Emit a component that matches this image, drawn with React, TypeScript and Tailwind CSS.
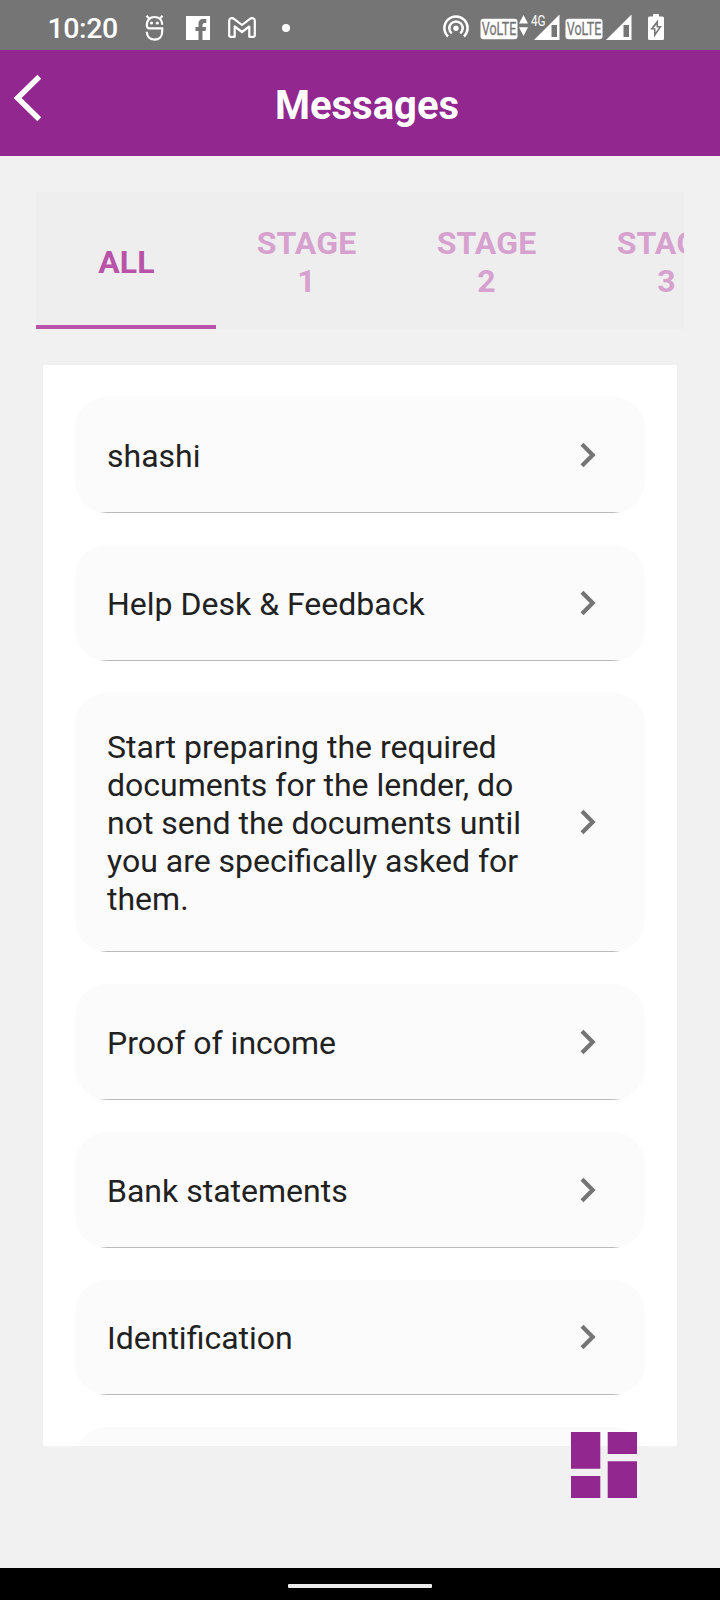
import { ReactNode } from "react";

const messages: string[] = [
  "shashi",
  "Help Desk & Feedback",
  "Start preparing the required documents for the lender, do not send the documents until you are specifically asked for them.",
  "Proof of income",
  "Bank statements",
  "Identification",
];

const stages = ["1", "2", "3"];

function VoLte() {
  return (
    <svg className="overflow-visible" width="38" height="22" viewBox="0 0 38 22">
      <rect x="0.5" y="0.8" width="37" height="20.4" rx="3" fill="#fff" />
      <text x="19" y="17.200" textAnchor="middle" textLength="34.500" lengthAdjust="spacingAndGlyphs" fontFamily="Roboto, sans-serif" fontSize="19" fill="#757575" stroke="#757575" strokeWidth="0.3">
        VoLTE
      </text>
    </svg>
  );
}

function Signal() {
  return (
    <svg width="26" height="26" viewBox="0 0 26 26" fill="#fff">
      <path fillRule="evenodd" d="M0 26 25.500 0.500V26ZM17.500 11V23H23V11Z" />
    </svg>
  );
}

function StatusBar() {
  return (
    <header className="flex h-[50px] items-start bg-[#757575] text-white">
      <span className="ml-[47.5px] mt-[12px] w-[70px] whitespace-nowrap text-[28.5px] font-medium leading-[33px] tracking-[-0.4px]">10:20</span>
      <svg className="ml-[27px] mt-[15px]" width="20" height="27" viewBox="0 0 20 27" fill="none" stroke="#fff" strokeWidth="2.2">
        <path d="M17.200 9.800C17.200 5 14 2 9.500 2S1.800 5 1.800 9.800Q1.800 13.400 4.500 13.400H17.200V16.500C17.200 21.500 14.300 24.600 9.500 24.600S1.800 21.500 1.800 16.800M1.500 .8 4.500 4M17.500 .8 14.500 4" />
        <g fill="#fff" stroke="none">
          <circle cx="6.500" cy="8" r="1.600" />
          <circle cx="12.300" cy="8" r="1.600" />
        </g>
      </svg>
      <svg className="ml-[21.500px] mt-4" width="24" height="24" viewBox="0 0 24 24">
        <path fill="#fff" fillRule="evenodd" d="M0 0H24V24H16.500V15H19.500L20.200 11H16.500V9Q16.500 7 18.500 7H20.300V3H17Q12.500 3 12.500 8V11H9.500V15H12.500V24H0Z" />
      </svg>
      <svg className="ml-[18px] mt-[17px]" width="28" height="21" viewBox="0 0 28 21" fill="none" stroke="#fff" strokeWidth="2.200" strokeLinejoin="round">
        <path d="M1.200 3.500C1.200 1.200 4 .3 6 1.900L14 8 22 1.900C24 .3 26.800 1.200 26.800 3.500V18.300Q26.800 19.800 25.300 19.800H21.300V9.500L14 15 6.700 9.500V19.800H2.700Q1.200 19.800 1.200 18.300Z" />
      </svg>
      <span className="ml-[26px] mt-6 size-2 rounded-full bg-white" />
      <svg className="ml-[153px] mt-[15px]" width="26" height="23" viewBox="0 0 26 23" fill="none" stroke="#fff" strokeWidth="2.500">
        <path d="M5 21.500A11.600 11.600 0 1 1 21 21.500M8.800 18.300A6.700 6.700 0 1 1 17.200 18.300" />
        <circle cx="13" cy="13.300" r="2.700" fill="#fff" stroke="none" />
      </svg>
      <div className="ml-[11px] mt-[17.500px]"><VoLte /></div>
      <svg className="ml-px mt-[15px]" width="9" height="21" viewBox="0 0 9 21" fill="#fff"><path d="M4.500 0 9 8.500H0ZM0 12.300H9L4.500 21Z" /></svg>
      <div className="relative ml-[6px] mt-[14px]">
        <Signal />
        <span className="absolute left-[-3px] top-0 origin-left scale-x-[0.78] text-[15px] leading-[15px]">4G</span>
      </div>
      <div className="ml-[4.500px] mt-[17.500px]"><VoLte /></div>
      <div className="ml-[3px] mt-[14px]"><Signal /></div>
      <svg className="ml-[16px] mt-[14px]" width="16" height="26" viewBox="0 0 16 26">
        <path fill="#fff" fillRule="evenodd" d="M5 0H11V2.500H14.500Q16 2.500 16 4V24.500Q16 26 14.500 26H1.500Q0 26 0 24.500V4Q0 2.500 1.500 2.500H5ZM10 5.500 2.200 15.500H6V23.500L13.800 12H10Z" />
        <path d="M8.500 10.500V13.500H11L7.500 18.500V14.200H5.300Z" fill="#fff" />
      </svg>
    </header>
  );
}

function Tab({ active = false, children }: { active?: boolean; children: ReactNode }) {
  return (
    <div
      className={
        "flex h-full w-[180px] shrink-0 items-center justify-center border-b-4 pl-px pt-1.5 text-center text-[32px] font-bold leading-[38px] tracking-[0.15px] " +
        (active ? "border-[#b853a9] text-[#b853a9]" : "border-transparent text-[#d6a1ce]")
      }
    >
      {children}
    </div>
  );
}

function MessageCard({ text }: { text: string }) {
  const long = text.length > 40;
  return (
    <div className={"flex shrink-0 flex-col overflow-hidden rounded-[32px] bg-[#fbfbfb] " + (long ? "h-[259.200px]" : "h-[115.800px]")}>
      <div className="flex flex-1 items-center pl-8">
        <p className="w-[440px] pt-[3px] text-[32px] leading-[38px] text-[#212121]">{text}</p>
        <svg className="ml-[33px] mt-px" width="24" height="26" viewBox="0 0 24 26" fill="none" stroke="#757575" strokeWidth="4.200">
          <path d="M2 2.300 12.700 13 2 23.700" />
        </svg>
      </div>
      <div className="h-px shrink-0 bg-[#b9b9b9]" />
    </div>
  );
}

export default function App() {
  return (
    <div className="flex h-[1600px] w-[720px] flex-col overflow-hidden bg-[#f1f1f1] font-['Roboto',sans-serif]">
      <StatusBar />
      <div className="grid h-[106px] shrink-0 grid-cols-[107px_1fr_93px] bg-[#92278f]">
        <svg className="ml-[13px] mt-[24px]" width="30" height="48" viewBox="0 0 30 48" fill="none" stroke="#fff" strokeWidth="5.500">
          <path d="M26.300 2.700 4.600 24 26.300 45.300" />
        </svg>
        <h1 className="self-center pt-1.5 text-center text-[40px] font-bold leading-[48px] text-white">Messages</h1>
      </div>
      <nav className="mx-9 mt-9 flex h-[137px] shrink-0 overflow-hidden bg-[#eeeeee]">
        <Tab active>ALL</Tab>
        {stages.map((s) => (
          <Tab key={s}>
            STAGE
            <br />
            {s}
          </Tab>
        ))}
      </nav>
      <main className="mx-[43px] mt-9 flex h-[1081px] shrink-0 flex-col gap-8 overflow-hidden bg-white px-8 pt-[32.2px]">
        {messages.map((m) => (
          <MessageCard key={m} text={m} />
        ))}
        <MessageCard text="" />
      </main>
      <div className="flex flex-1 justify-end pr-[83px]">
        <svg className="relative -top-[14px] overflow-visible" width="66" height="66" viewBox="0 0 66 66">
          <path fill="#92278f" d="M0 0H29.300V36.700H0ZM36.700 0H66V22H36.700ZM0 44H29.300V66H0ZM36.700 29.300H66V66H36.700Z" />
        </svg>
      </div>
      <footer className="flex h-8 shrink-0 items-center justify-center bg-black pt-1">
        <div className="h-1 w-36 rounded-[1px] bg-[#ebebeb]" />
      </footer>
    </div>
  );
}
